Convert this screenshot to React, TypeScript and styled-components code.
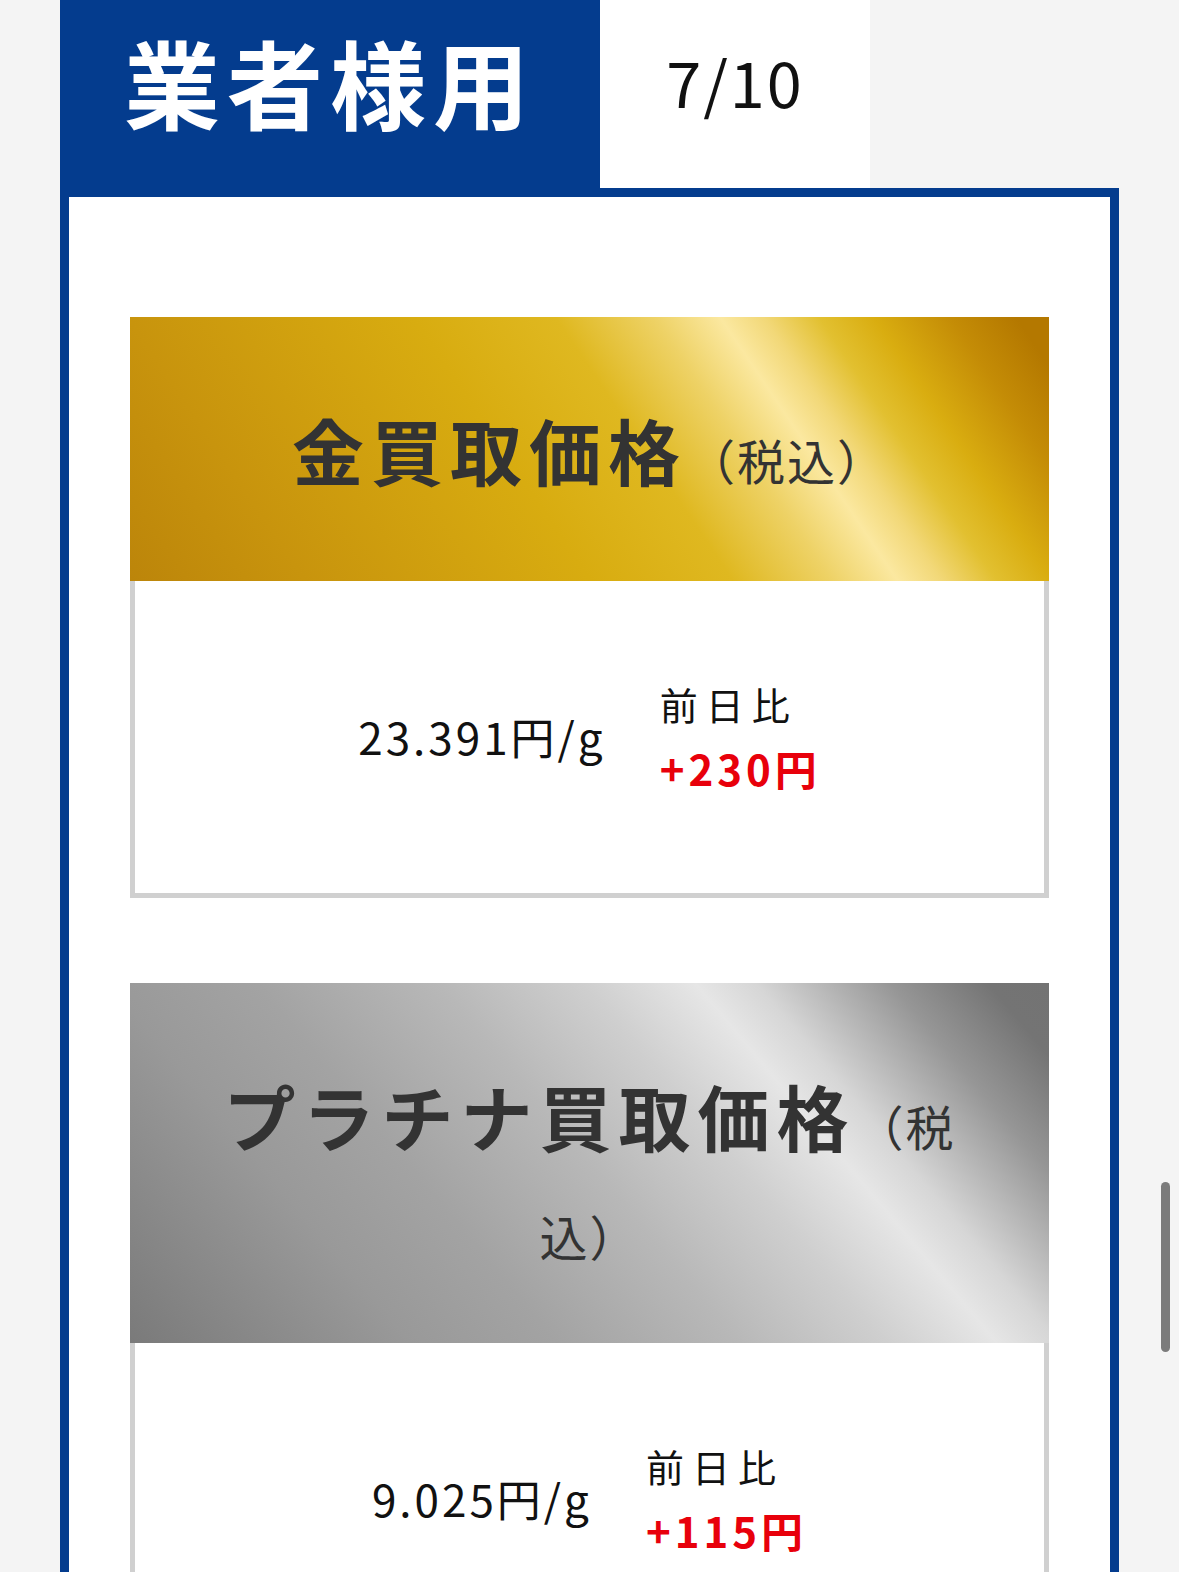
import styled, { createGlobalStyle } from "styled-components";

type Metal = "gold" | "platinum";

interface PriceCardProps {
  metal: Metal;
  title: string;
  price: string;
  diff: string;
}

const BLUE = "#043c8e";

const metalFaces: Record<Metal, string> = {
  gold: `linear-gradient(
    56deg,
    #bc850a 0%,
    #c8940d 16%,
    #d8ac10 42%,
    #dfb820 55%,
    #eed266 64%,
    #fbe8a0 70%,
    #f2d878 74%,
    #e2c030 79%,
    #d9ad10 84%,
    #c48c06 91%,
    #b47800 97%,
    #b47800 100%
  )`,
  platinum: `linear-gradient(
    50deg,
    #7a7a7a 0%,
    #999999 23%,
    #a3a3a3 35%,
    #b8b8b8 50%,
    #cfcfcf 62%,
    #e6e6e6 71%,
    #d6d6d6 76%,
    #969696 87%,
    #747474 95%,
    #737373 100%
  )`,
};

const GlobalStyle = createGlobalStyle`
  *, *::before, *::after {
    box-sizing: border-box;
  }

  html, body {
    margin: 0;
    padding: 0;
    background: #f4f4f4;
  }

  body {
    font-family: "Noto Sans CJK JP", "Noto Sans", sans-serif;
    color: #111;
  }

  ::-webkit-scrollbar {
    display: none;
  }
`;

const Page = styled.div`
  position: relative;
  height: 100vh;
  overflow: hidden;
  padding: 0 60px;
`;

const TabRow = styled.div`
  display: flex;
`;

const TitleTab = styled.div`
  width: 540px;
  height: 188px;
  background: ${BLUE};
  color: #fff;
  font-size: 96px;
  font-weight: 700;
  line-height: 162px;
  letter-spacing: 7px;
  text-align: center;
`;

const DateTab = styled.div`
  width: 270px;
  height: 188px;
  background: #fff;
  color: #111;
  font-size: 63px;
  line-height: 161px;
  letter-spacing: 2px;
  text-align: center;
`;

const Frame = styled.div`
  display: flex;
  flex-direction: column;
  gap: 85px;
  border: 9px solid ${BLUE};
  background: #fff;
  padding: 120px 61px;
`;

const Card = styled.section``;

const CardHead = styled.h2<{ $metal: Metal }>`
  margin: 0;
  padding: 60px;
  background: ${({ $metal }) => metalFaces[$metal]};
  color: #333;
  font-size: 48px;
  font-weight: 400;
  line-height: 2;
  text-align: center;
`;

const HeadMain = styled.span`
  font-size: 72px;
  font-weight: 700;
  letter-spacing: 7px;
`;

const HeadNote = styled.span`
  letter-spacing: 2px;
`;

const CardBody = styled.div`
  display: flex;
  justify-content: center;
  align-items: center;
  gap: 54px;
  padding: 91px 0 93px;
  border: 5px solid #d0d0d0;
  border-top: none;
`;

const Price = styled.div`
  font-size: 44px;
  line-height: 64px;
  letter-spacing: 3px;
  color: #111;
`;

const Change = styled.div`
  line-height: 64px;
`;

const ChangeLabel = styled.div`
  font-size: 38px;
  letter-spacing: 8px;
  color: #111;
`;

const ChangeValue = styled.div`
  font-size: 42px;
  font-weight: 700;
  letter-spacing: 4px;
  color: #e8000b;
`;

const ScrollThumb = styled.div`
  position: absolute;
  top: 1182px;
  right: 9px;
  width: 9px;
  height: 170px;
  border-radius: 5px;
  background: #7b7b7b;
`;

const PriceCard: React.FC<PriceCardProps> = ({ metal, title, price, diff }) => (
  <Card>
    <CardHead $metal={metal}>
      <HeadMain>{title}</HeadMain>
      <HeadNote>（税込）</HeadNote>
    </CardHead>
    <CardBody>
      <Price>{price}</Price>
      <Change>
        <ChangeLabel>前日比</ChangeLabel>
        <ChangeValue>{diff}</ChangeValue>
      </Change>
    </CardBody>
  </Card>
);

const App = () => {
  return (
    <>
      <GlobalStyle />
      <Page>
        <TabRow>
          <TitleTab>業者様用</TitleTab>
          <DateTab>7/10</DateTab>
        </TabRow>
        <Frame>
          <PriceCard metal="gold" title="金買取価格" price="23.391円/g" diff="+230円" />
          <PriceCard metal="platinum" title="プラチナ買取価格" price="9.025円/g" diff="+115円" />
        </Frame>
        <ScrollThumb />
      </Page>
    </>
  );
};

export default App;
